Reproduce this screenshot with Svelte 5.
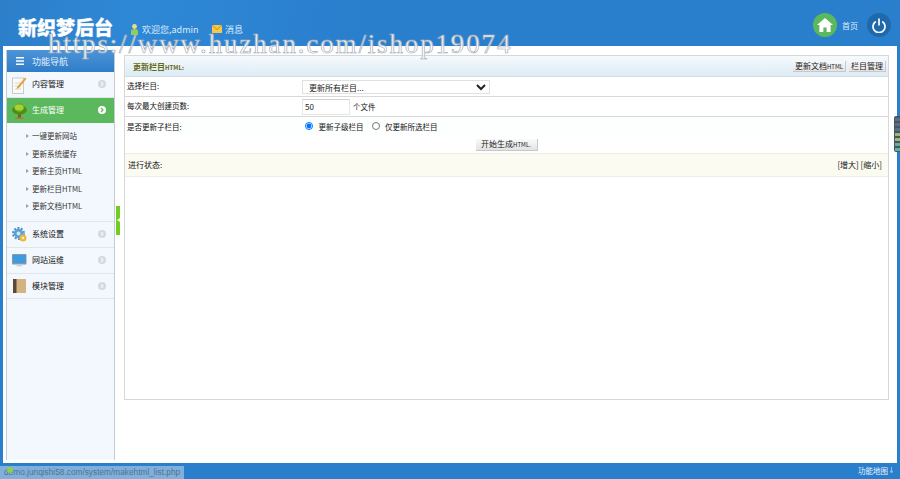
<script lang="ts">
	const subItems = ['一键更新网站', '更新系统缓存', '更新主页HTML', '更新栏目HTML', '更新文档HTML'];
</script>

{#snippet arrow(on = false)}
	<svg class="arrow" viewBox="0 0 8 8" aria-hidden="true">
		<circle cx="4" cy="4" r="4" fill={on ? '#fff' : '#d5d9dc'} />
		<path d="M3 2l2 2-2 2" fill="none" stroke={on ? '#5cb85c' : '#f4f6f8'} stroke-width="1.2" />
	</svg>
{/snippet}

<div class="page">
	<header class="top">
		<div class="logo">新织梦后台</div>
		<div class="welcome">
			<svg width="7" height="11" viewBox="0 0 7 11" aria-hidden="true">
				<circle cx="3.5" cy="2.5" r="2.4" fill="#f3d98a" />
				<path d="M0 11V7q0-2 3.5-2T7 7v4z" fill="#8ed05a" />
			</svg>
			<span>欢迎您,admin</span>
		</div>
		<div class="msg">
			<svg width="10" height="8" viewBox="0 0 10 8" aria-hidden="true">
				<rect width="10" height="8" fill="#f5c84a" />
				<path d="M0 0l5 4.5L10 0" fill="none" stroke="#c98f1c" stroke-width="1" />
			</svg>
			<span>消息</span>
		</div>
		<div class="top-right">
			<span class="round home">
				<svg width="16" height="14" viewBox="0 0 16 14" aria-hidden="true">
					<path d="M8 0L0 7h2.4v7h4V9.500h3.200V14h4V7H16z" fill="#fff" />
				</svg>
			</span>
			<span class="home-label">首页</span>
			<span class="round power">
				<svg width="14" height="15" viewBox="0 0 14 15" aria-hidden="true">
					<path d="M3.800 3.500a6 6 0 1 0 6.400 0" fill="none" stroke="#fff" stroke-width="1.700" />
					<path d="M7 .5v7" stroke="#fff" stroke-width="1.700" />
				</svg>
			</span>
		</div>
	</header>

	<div class="middle">
		<aside class="side">
			<div class="side-head">
				<svg width="8" height="8" viewBox="0 0 8 8" aria-hidden="true">
					<path d="M0 0h8v1.500H0zM0 3.200h8v1.500H0zM0 6.500h8V8H0z" fill="#fff" />
				</svg>
				<span>功能导航</span>
			</div>

			<div class="menu-row">
				<svg class="ico" width="15" height="18" viewBox="0 0 15 18" aria-hidden="true">
					<rect x=".5" y="2" width="11" height="15.500" fill="#fafafa" stroke="#c9c9c9" />
					<path d="M3 7h6M3 10h6M3 13h6" stroke="#d8d8d8" />
					<path d="M5 11L13 1.500l1.500 1.300L7 12l-2.500 1z" fill="#e8a33a" />
				</svg>
				<span>内容管理</span>
				{@render arrow()}
			</div>

			<div class="menu-row active">
				<svg class="ico" width="15" height="16" viewBox="0 0 15 16" aria-hidden="true">
					<rect x="6" y="10" width="3" height="5" fill="#8a5a22" />
					<ellipse cx="7.500" cy="7" rx="7.400" ry="4.500" fill="#4e8f12" />
					<circle cx="7.500" cy="4.500" r="4.500" fill="#6eaa16" />
					<ellipse cx="7" cy="4.500" rx="4.500" ry="3" fill="#a4d03a" />
					<rect x="3.500" y="14.500" width="8" height="1.500" fill="#a97a3a" />
				</svg>
				<span>生成管理</span>
				{@render arrow(true)}
			</div>

			<ul class="sub">
				{#each subItems as item}
					<li>{item}</li>
				{/each}
			</ul>

			<div class="menu-row">
				<svg class="ico" width="15" height="15" viewBox="0 0 15 15" aria-hidden="true">
					<circle cx="6.500" cy="6.500" r="5.500" fill="none" stroke="#4f94c9" stroke-width="2" stroke-dasharray="2 1.450" />
					<circle cx="6.500" cy="6.500" r="4.700" fill="#5b9fd3" />
					<circle cx="6.500" cy="6.500" r="2" fill="#cfe6f5" />
					<circle cx="11" cy="11" r="3.500" fill="#f0b93a" />
					<circle cx="11" cy="11" r="1.200" fill="#fff1c4" />
				</svg>
				<span>系统设置</span>
				{@render arrow()}
			</div>

			<div class="menu-row">
				<svg class="ico" width="15" height="14" viewBox="0 0 15 14" aria-hidden="true">
					<rect width="14.500" height="10.500" rx="1" fill="#8a97a3" />
					<rect x="1" y="1" width="12.500" height="8" fill="#3d9be0" />
					<path d="M5 10.500h4.500l.5 2H4.500z" fill="#c9d1d8" />
				</svg>
				<span>网站运维</span>
				{@render arrow()}
			</div>

			<div class="menu-row last">
				<svg class="ico" width="15" height="14" viewBox="0 0 14 14" aria-hidden="true">
					<rect x=".5" width="13" height="14" fill="#d3b480" />
					<rect x=".5" width="3.500" height="14" fill="#5a4a36" />
				</svg>
				<span>模块管理</span>
				{@render arrow()}
			</div>
		</aside>

		<div class="toggle"></div>

		<main class="content">
			<section class="panel">
				<div class="panel-head">
					<strong>更新栏目<small>HTML:</small></strong>
					<div class="panel-btns">
						<button class="btn-doc">更新文档<small>HTML</small></button>
						<button class="btn-cat">栏目管理</button>
					</div>
				</div>

				<div class="row">
					<label class="cell-label" for="typeid">选择栏目:</label>
					<div class="cell">
						<select id="typeid"><option>更新所有栏目...</option></select>
					</div>
				</div>
				<div class="row">
					<label class="cell-label" for="maxpage">每次最大创建页数:</label>
					<div class="cell">
						<input id="maxpage" type="text" value="50" />
						<span class="unit">个文件</span>
					</div>
				</div>
				<div class="row row-last">
					<span class="cell-label">是否更新子栏目:</span>
					<div class="cell radios">
						<input type="radio" name="upnext" checked />
						<span>更新子级栏目</span>
						<input type="radio" name="upnext" />
						<span>仅更新所选栏目</span>
					</div>
				</div>

				<div class="submit-row"><button class="btn-go">开始生成<small>HTML.</small></button></div>

				<div class="status">
					<span>进行状态:</span>
					<span>[增大] [缩小]</span>
				</div>
			</section>
		</main>

		<div class="dock">
			<i></i><i></i><i></i><i class="g"></i><i class="g"></i><i class="t"></i><i class="t"></i>
		</div>
	</div>

	<footer class="bottom">
		<span>功能地图</span>
		<svg width="3" height="6" viewBox="0 0 3 6" aria-hidden="true">
			<path d="M1.500 0v5M0 3.500L1.500 6 3 3.500" fill="none" stroke="#a9cdee" stroke-width=".8" />
		</svg>
	</footer>

	<div class="status-url">demo.junqishi58.com/system/makehtml_list.php</div>
	<div class="watermark">https://www.huzhan.com/ishop19074</div>
</div>

<style>
	:global(body) {
		background: #fff;
	}

	.page {
		position: relative;
		display: flex;
		flex-direction: column;
		width: 900px;
		height: 479px;
		overflow: hidden;
		background: #2a7fcd;
		font-family: 'Noto Sans CJK SC', 'Liberation Sans', sans-serif;
		font-size: 8px;
		color: #111;
	}

	.top {
		flex: none;
		display: flex;
		align-items: center;
		height: 46px;
		padding: 0 9px 0 18px;
		box-sizing: border-box;
		background: linear-gradient(100deg, #2d7fc9, #2e88d6 15%, #2a7fcd 40%);
		color: #fff;
	}

	.logo {
		margin-top: 7px;
		width: 113px;
		font-size: 19px;
		font-weight: 900;
		line-height: 24px;
		-webkit-text-stroke: 0.3px #fff;
	}

	.welcome,
	.msg {
		display: flex;
		align-items: center;
		gap: 4px;
		margin-top: 12px;
		font-size: 9px;
		color: #dcecfa;
	}

	.welcome {
		width: 81px;
	}

	.msg {
		gap: 3px;
	}

	.top-right {
		display: flex;
		align-items: center;
		margin-left: auto;
		margin-top: 4px;
	}

	.round {
		display: flex;
		align-items: center;
		justify-content: center;
		width: 24px;
		height: 24px;
		border-radius: 50%;
	}

	.home {
		background: #5cb85c;
	}

	.power {
		background: #1f69ab;
	}

	.home-label {
		width: 30px;
		padding-left: 5px;
		box-sizing: border-box;
		color: #dcecfa;
	}

	.middle {
		flex: 1;
		display: flex;
		margin: 0 3px;
		background: #fff;
		position: relative;
		min-height: 0;
	}

	.side {
		flex: none;
		width: 109px;
		margin: 4px 0 3px 3px;
		box-sizing: border-box;
		border-left: 1px solid #c3ccd4;
		border-right: 1px solid #c3ccd4;
		background: #f3f8fe;
	}

	.side-head {
		display: flex;
		align-items: center;
		gap: 8px;
		height: 22px;
		padding-left: 9px;
		background: linear-gradient(#4d94d8, #2f7dc8);
		color: #e4f0fb;
		font-size: 9px;
	}

	.menu-row {
		display: flex;
		align-items: center;
		gap: 5px;
		height: 26px;
		padding: 0 8px 0 5px;
		border-bottom: 1px solid #dfe6ec;
		box-sizing: border-box;
		font-size: 8px;
		color: #111;
	}

	.menu-row span {
		margin-top: -2px;
	}

	.menu-row .ico {
		flex: none;
	}

	.menu-row .arrow {
		margin: -1px 0 0 auto;
	}

	.arrow {
		width: 8px;
		height: 8px;
		flex: none;
	}

	.active {
		height: 25px;
		border-bottom: 0;
		background: #5cb85c;
		color: #fff;
	}

	.last {
		height: 25px;
	}

	.sub {
		list-style: none;
		margin: 0;
		padding: 4px 0 0 25px;
		height: 99px;
		box-sizing: border-box;
		border-bottom: 1px solid #dfe6ec;
		font-size: 7.500px;
		color: #333;
	}

	.sub li {
		position: relative;
		height: 17.500px;
		line-height: 17.500px;
	}

	.sub li::before {
		content: '';
		position: absolute;
		left: -6px;
		top: 7px;
		border-left: 3px solid #9aa3ab;
		border-top: 2px solid transparent;
		border-bottom: 2px solid transparent;
	}

	.toggle {
		position: absolute;
		left: 113px;
		top: 160px;
		width: 4px;
		height: 29px;
		background: #6fcf1f;
	}

	.toggle::after {
		content: '';
		position: absolute;
		left: 1px;
		top: 12px;
		border-right: 3px solid #fff;
		border-top: 2.500px solid transparent;
		border-bottom: 2.500px solid transparent;
	}

	.content {
		flex: 1;
		padding: 9px 8px 0 9px;
		min-width: 0;
	}

	.panel {
		display: flex;
		flex-direction: column;
		height: 345px;
		box-sizing: border-box;
		border: 1px solid #d6d9dc;
	}

	.panel-head {
		display: flex;
		align-items: center;
		justify-content: space-between;
		height: 21px;
		padding: 0 2px 0 8px;
		flex: none;
		border-bottom: 1px solid #d6dde2;
		box-sizing: border-box;
		background: linear-gradient(#f6fafd, #dcebf5);
	}

	.panel-head strong {
		color: #666a14;
		font-size: 8px;
	}

	small {
		font-size: 6px;
	}

	.panel-btns {
		display: flex;
		gap: 3px;
	}

	button {
		padding: 0;
		height: 11px;
		font: inherit;
		font-size: 8px;
		line-height: 10px;
		color: #222;
		background: linear-gradient(#fafafa, #e3e3e3);
		border: 1px solid #c8c8c8;
		border-width: 0 1px 1px 0;
		white-space: nowrap;
	}

	.btn-doc {
		width: 53px;
	}

	.btn-cat {
		width: 37px;
	}

	.btn-go {
		width: 62px;
		height: 12px;
	}

	.row {
		display: flex;
		align-items: center;
		flex: none;
		height: 20px;
		border-bottom: 1px solid #d9d9d9;
		box-sizing: border-box;
	}

	.row-last {
		border-bottom: 0;
		background: #fdfefe;
	}

	.cell-label {
		flex: none;
		width: 177px;
		margin-top: -2px;
		padding-left: 2px;
		box-sizing: border-box;
		font-size: 7.500px;
		color: #111;
	}

	.cell {
		display: flex;
		align-items: center;
		font-size: 7.500px;
	}

	select {
		width: 188px;
		height: 14px;
		padding: 0 0 0 2px;
		font: inherit;
		font-size: 8px;
		color: #222;
		background: #fff;
		border: 1px solid #e0e0e0;
	}

	input[type='text'] {
		width: 48px;
		height: 16px;
		padding: 0 2px;
		box-sizing: border-box;
		font: inherit;
		font-size: 8px;
		color: #222;
		border: 1px solid #e6e6e6;
		border-top-color: #d2d2d2;
	}

	.unit {
		margin: -1px 0 0 3px;
		font-size: 7.500px;
	}

	.radios {
		margin-top: -2px;
	}

	.radios input {
		width: 8px;
		height: 8px;
		margin: 0 0 0 3px;
	}

	.radios span {
		margin: 0 5px 0 5.500px;
	}

	.submit-row {
		display: flex;
		justify-content: center;
		align-items: center;
		flex: none;
		height: 16px;
	}

	.status {
		display: flex;
		align-items: center;
		justify-content: space-between;
		flex: none;
		height: 24px;
		padding: 0 6px 2px 3px;
		box-sizing: border-box;
		background: #fbfbf1;
		border-top: 1px solid #eeeee4;
		border-bottom: 1px solid #eeeee4;
	}

	.dock {
		position: absolute;
		right: -3px;
		top: 70px;
		display: flex;
		flex-direction: column;
		justify-content: center;
		gap: 2px;
		width: 6px;
		height: 36px;
		padding-left: 1px;
		box-sizing: border-box;
		border-radius: 2px 0 0 2px;
		background: #4b5560;
	}

	.dock i {
		display: block;
		height: 3px;
		background: #5a6f8a;
	}

	.dock i.g {
		background: #9ab87a;
	}

	.dock i.t {
		background: #5fb0a0;
	}

	.bottom {
		flex: none;
		display: flex;
		align-items: center;
		justify-content: flex-end;
		gap: 2px;
		height: 16px;
		padding: 0 7px 2px 0;
		box-sizing: border-box;
		background: #2a7fcd;
		font-size: 7.500px;
		color: #e8f2fb;
	}

	.status-url {
		position: absolute;
		left: 0;
		bottom: 0;
		width: 184px;
		height: 13px;
		padding-left: 4px;
		box-sizing: border-box;
		line-height: 13px;
		font-family: 'Liberation Sans', sans-serif;
		font-size: 8.300px;
		color: #52708f;
		background: #7fb0dc;
		white-space: nowrap;
	}

	.status-url::before {
		content: '';
		position: absolute;
		left: 7px;
		top: 1px;
		width: 6px;
		height: 6px;
		border-radius: 50%;
		background: #8fcf4a;
	}

	.watermark {
		position: absolute;
		left: 48px;
		top: 29px;
		font-family: 'Liberation Serif', serif;
		font-size: 27px;
		line-height: 30px;
		letter-spacing: 1.850px;
		color: rgba(255, 255, 255, 0.6);
		-webkit-text-stroke: 0.6px #9aa4ad;
		text-shadow: 0 0 1px rgba(255, 255, 255, 0.8);
		white-space: nowrap;
		pointer-events: none;
	}
</style>
